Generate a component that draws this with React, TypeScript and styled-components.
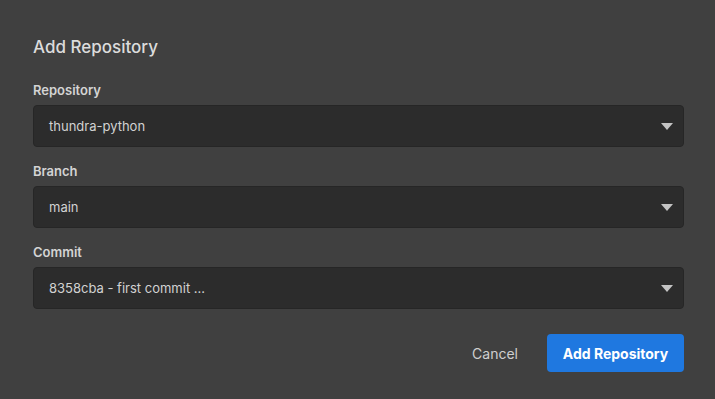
import styled, { createGlobalStyle } from "styled-components";

const GlobalStyle = createGlobalStyle`
  html, body {
    margin: 0;
    padding: 0;
    background: #404040;
  }
  body {
    font-family: Inter, "Noto Sans", sans-serif;
  }
`;

const Dialog = styled.div`
  width: 715px;
  height: 399px;
  box-sizing: border-box;
  padding: 37px 31px 0 33px;
  background: #404040;
  display: flex;
  flex-direction: column;
`;

const Title = styled.h2`
  margin: 0 0 25px;
  font-size: 17px;
  line-height: 20px;
  font-weight: 500;
  color: #dcdcdc;
`;

const Fields = styled.div`
  display: flex;
  flex-direction: column;
  gap: 16px;
`;

const Field = styled.div`
  display: flex;
  flex-direction: column;
  gap: 7px;
`;

const Label = styled.label`
  font-size: 13px;
  line-height: 16px;
  font-weight: 600;
  color: #d4d4d4;
`;

const Select = styled.div`
  height: 42px;
  box-sizing: border-box;
  border: 1px solid #262626;
  border-radius: 4px;
  background: #2c2c2c;
  display: flex;
  align-items: center;
  justify-content: space-between;
  padding: 0 10px 0 15px;
  font-size: 13px;
  color: #d2d2d2;
`;

const Caret = styled.span`
  width: 0;
  height: 0;
  border-left: 6px solid transparent;
  border-right: 6px solid transparent;
  border-top: 7px solid #c4c4c4;
`;

const Actions = styled.div`
  margin-top: 25px;
  display: flex;
  justify-content: flex-end;
  align-items: center;
  gap: 29px;
`;

const CancelButton = styled.button`
  background: none;
  border: none;
  padding: 0;
  font-family: inherit;
  font-size: 14px;
  color: #cfcfcf;
`;

const PrimaryButton = styled.button`
  width: 137px;
  height: 38px;
  border: none;
  border-radius: 4px;
  background: #1f78e0;
  color: #ffffff;
  font-family: inherit;
  font-size: 14px;
  font-weight: 700;
`;

const fields = [
  { label: "Repository", value: "thundra-python" },
  { label: "Branch", value: "main" },
  { label: "Commit", value: "8358cba - first commit ..." },
];

function App() {
  return (
    <>
      <GlobalStyle />
      <Dialog>
        <Title>Add Repository</Title>
        <Fields>
          {fields.map((f) => (
            <Field key={f.label}>
              <Label>{f.label}</Label>
              <Select>
                <span>{f.value}</span>
                <Caret />
              </Select>
            </Field>
          ))}
        </Fields>
        <Actions>
          <CancelButton>Cancel</CancelButton>
          <PrimaryButton>Add Repository</PrimaryButton>
        </Actions>
      </Dialog>
    </>
  );
}

export default App;
